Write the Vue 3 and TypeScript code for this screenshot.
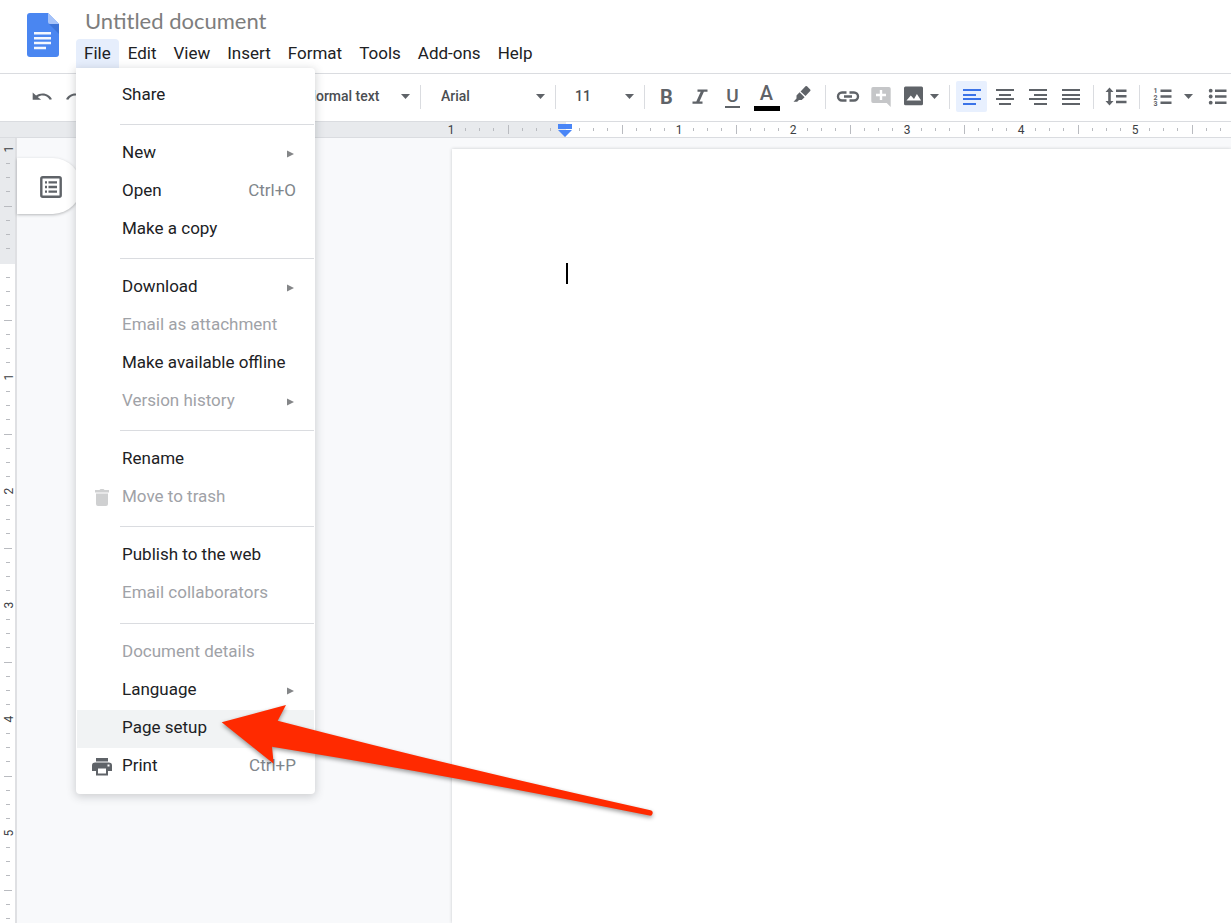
<script setup lang="ts">
import { computed, onBeforeUnmount, onMounted, ref } from 'vue'

interface MenuItem {
  label: string
  shortcut?: string
  submenu?: boolean
  disabled?: boolean
  active?: boolean
  icon?: 'trash' | 'print'
}

interface Tick {
  at: number
  major: boolean
}

interface RulerLabel {
  at: number
  text: string
}

const INCH = 114
const H_ORIGIN = 565
const V_ORIGIN = 125
const WORKSPACE_TOP = 138

const title = ref('Untitled document')
const paragraphStyle = ref('Normal text')
const font = ref('Arial')
const size = ref('11')

const menus: string[] = ['File', 'Edit', 'View', 'Insert', 'Format', 'Tools', 'Add-ons', 'Help']

const fileMenu: MenuItem[][] = [
  [{ label: 'Share' }],
  [{ label: 'New', submenu: true }, { label: 'Open', shortcut: 'Ctrl+O' }, { label: 'Make a copy' }],
  [
    { label: 'Download', submenu: true },
    { label: 'Email as attachment', disabled: true },
    { label: 'Make available offline' },
    { label: 'Version history', submenu: true, disabled: true },
  ],
  [{ label: 'Rename' }, { label: 'Move to trash', disabled: true, icon: 'trash' }],
  [{ label: 'Publish to the web' }, { label: 'Email collaborators', disabled: true }],
  [
    { label: 'Document details', disabled: true },
    { label: 'Language', submenu: true },
    { label: 'Page setup', active: true },
    { label: 'Print', shortcut: 'Ctrl+P', icon: 'print' },
  ],
]

// Ruler marks: one every eighth of an inch, a taller one at each half inch.
function makeTicks(origin: number, length: number): Tick[] {
  const ticks: Tick[] = []
  for (let i = -7; origin + (i * INCH) / 8 < length; i++) {
    if (i % 8 === 0) continue
    ticks.push({ at: Math.floor(origin + (i * INCH) / 8), major: i % 4 === 0 })
  }
  return ticks
}

// Numbers are drawn only where they fit whole on the ruler.
function makeLabels(origin: number, length: number): RulerLabel[] {
  const labels: RulerLabel[] = [{ at: origin - INCH, text: '1' }]
  for (let i = 1; origin + i * INCH < length - 6; i++) {
    labels.push({ at: origin + i * INCH, text: String(i) })
  }
  return labels
}

const viewWidth = ref(window.innerWidth)
const viewHeight = ref(window.innerHeight)

function measure(): void {
  viewWidth.value = window.innerWidth
  viewHeight.value = window.innerHeight
}

onMounted(() => window.addEventListener('resize', measure))
onBeforeUnmount(() => window.removeEventListener('resize', measure))

const hTicks = computed(() => makeTicks(H_ORIGIN, viewWidth.value))
const hLabels = computed(() => makeLabels(H_ORIGIN, viewWidth.value))
const vTicks = computed(() => makeTicks(V_ORIGIN, viewHeight.value - WORKSPACE_TOP))
const vLabels = computed(() => makeLabels(V_ORIGIN, viewHeight.value - WORKSPACE_TOP))

const alignments = [
  { name: 'Left align', active: true, d: 'M3 5h18M3 10h13M3 14h18M3 19h13' },
  { name: 'Center align', active: false, d: 'M3 5h18M6 10h12M3 14h18M6 19h12' },
  { name: 'Right align', active: false, d: 'M3 5h18M8 10h13M3 14h18M8 19h13' },
  { name: 'Justify', active: false, d: 'M3 5h18M3 10h18M3 14h18M3 19h18' },
]
</script>

<template>
  <div class="app">
    <header class="header">
      <a class="logo" href="#" aria-label="Docs home">
        <svg width="32" height="44" viewBox="0 0 32 44">
          <path d="M3 0h18l11 11v30a3 3 0 0 1-3 3H3a3 3 0 0 1-3-3V3a3 3 0 0 1 3-3z" fill="#4a86f1" />
          <path d="M22 11h10v10z" fill="#3d74d8" />
          <path d="M21 0l11 11H23a2 2 0 0 1-2-2z" fill="#a6c3f9" />
          <path d="M7 20.300h17M7 25.200h17M7 30h17M7 35h12" stroke="#f4f7fe" stroke-width="2.400" />
        </svg>
      </a>
      <div class="heading">
        <input v-model="title" class="title" aria-label="Document title" />
        <nav class="menubar" aria-label="Menu bar">
          <button v-for="m in menus" :key="m" type="button" class="menu-button" :class="{ open: m === 'File' }">{{ m }}</button>
          <div class="dropdown" role="menu" aria-label="File">
            <div v-for="(group, g) in fileMenu" :key="g" class="group" role="group">
              <button
                v-for="item in group"
                :key="item.label"
                type="button"
                role="menuitem"
                class="item"
                :class="{ active: item.active }"
                :disabled="item.disabled"
              >
                <span class="item-icon">
                  <svg v-if="item.icon === 'trash'" width="16" height="18" viewBox="0 0 16 18" fill="#cfd0d1">
                    <path d="M1 1h4.500l1-1h3l1 1H15v2.500H1zM2 4.500h12V15a2 2 0 0 1-2 2H4a2 2 0 0 1-2-2z" />
                  </svg>
                  <svg v-if="item.icon === 'print'" width="20" height="18" viewBox="0 0 20 18" fill="#5f6368">
                    <path
                      fill-rule="evenodd"
                      d="M4 0h12v3.500H4zM3 4.500h14a3 3 0 0 1 3 3V13h-4v4.500H4V13H0V7.500a3 3 0 0 1 3-3zM6 10.500v5h8v-5zM15.500 6.500v2h2v-2z"
                    />
                  </svg>
                </span>
                <span class="item-label">{{ item.label }}</span>
                <span v-if="item.shortcut" class="shortcut">{{ item.shortcut }}</span>
                <svg v-if="item.submenu" class="chevron" width="8" height="8" viewBox="0 0 8 8">
                  <path d="M0 .5l7 3.500-7 3.500z" fill="#848688" />
                </svg>
              </button>
            </div>
          </div>
        </nav>
      </div>
    </header>

    <div class="toolbar" role="toolbar" aria-label="Formatting">
      <button type="button" class="tool" aria-label="Undo">
        <svg class="icon" viewBox="0 0 24 24">
          <path
            transform="translate(.8 2) scale(.94 .8)"
            d="M12.500 8c-2.650 0-5.050.99-6.900 2.600L2 7v9h9l-3.620-3.620c1.390-1.160 3.160-1.880 5.120-1.880 3.540 0 6.550 2.310 7.600 5.500l2.370-.78C21.080 11.030 17.150 8 12.500 8z"
          />
        </svg>
      </button>
      <button type="button" class="tool" aria-label="Redo">
        <svg class="icon" viewBox="0 0 24 24">
          <path
            transform="translate(24.200 2) scale(-.94 .8)"
            d="M12.500 8c-2.650 0-5.050.99-6.900 2.600L2 7v9h9l-3.620-3.620c1.390-1.160 3.160-1.880 5.120-1.880 3.540 0 6.550 2.310 7.600 5.500l2.370-.78C21.080 11.030 17.150 8 12.500 8z"
          />
        </svg>
      </button>

      <div class="picker style-picker">
        <select v-model="paragraphStyle" aria-label="Styles">
          <option>Normal text</option>
        </select>
        <svg class="caret" viewBox="0 0 9 5"><path d="M0 0h9L4.500 5z" /></svg>
      </div>
      <span class="divider"></span>
      <div class="picker font-picker">
        <select v-model="font" aria-label="Font">
          <option>Arial</option>
        </select>
        <svg class="caret" viewBox="0 0 9 5"><path d="M0 0h9L4.500 5z" /></svg>
      </div>
      <span class="divider"></span>
      <div class="picker size-picker">
        <select v-model="size" aria-label="Font size">
          <option>11</option>
        </select>
        <svg class="caret" viewBox="0 0 9 5"><path d="M0 0h9L4.500 5z" /></svg>
      </div>
      <span class="divider"></span>

      <button type="button" class="tool letter bold" aria-label="Bold">B</button>
      <button type="button" class="tool" aria-label="Italic">
        <svg class="icon" viewBox="0 0 24 24">
          <path d="M9.500 4.500h10v2.200h-3.600L11.500 16.500h3v2.200h-10V16.500h3.800l4.400-9.800H9.500z" />
        </svg>
      </button>
      <button type="button" class="tool letter underline" aria-label="Underline">U</button>
      <button type="button" class="tool letter color" aria-label="Text color">A</button>
      <button type="button" class="tool highlight" aria-label="Highlight color">
        <svg class="icon" viewBox="0 0 24 24">
          <path d="M15.500 1.300q.8-.6 1.500 0l3.200 3.200q.7.800 0 1.600L15.500 11l-4.900-4.600z" />
          <path d="M9.600 7.300l5 4.900-2.900 2.800H9l-1.800 1.800H3.500l3-3.200v-3.200z" />
        </svg>
      </button>
      <span class="divider"></span>

      <button type="button" class="tool" aria-label="Insert link">
        <svg class="icon line" viewBox="0 0 24 24">
          <path d="M10.500 7.500H6a4 4 0 0 0 0 8h4.500M13.500 7.500H18a4 4 0 0 1 0 8h-4.500M8 11.500h8" />
        </svg>
      </button>
      <button type="button" class="tool" aria-label="Add comment" disabled>
        <svg class="icon" viewBox="0 0 24 24">
          <path d="M4 2h16a1.700 1.700 0 0 1 1.700 1.700v18.200l-4-3.900H4A1.700 1.700 0 0 1 2.300 16.300V3.700A1.700 1.700 0 0 1 4 2z" fill="#c5c6c8" />
          <path d="M12 5v10M7 10h10" stroke="#fff" stroke-width="2.400" />
        </svg>
      </button>
      <button type="button" class="tool" aria-label="Insert image">
        <svg class="icon" viewBox="0 0 24 24">
          <rect x="2" y="1.500" width="19" height="18.700" rx="1.500" />
          <path d="M4.500 15.500l4.300-5 3.200 3.600L14.900 9l4.200 6.500z" fill="#fff" />
        </svg>
      </button>
      <button type="button" class="drop image-drop" aria-label="Image options">
        <svg class="caret" viewBox="0 0 9 5"><path d="M0 0h9L4.500 5z" /></svg>
      </button>
      <span class="divider"></span>

      <button
        v-for="a in alignments"
        :key="a.name"
        type="button"
        class="tool"
        :class="{ selected: a.active }"
        :aria-label="a.name"
        :aria-pressed="a.active"
      >
        <svg class="icon bars" viewBox="0 0 24 24"><path :d="a.d" /></svg>
      </button>
      <span class="divider wide"></span>

      <button type="button" class="tool" aria-label="Line spacing">
        <svg class="icon" viewBox="0 0 24 24">
          <path d="M4.500 2.500l4 4.500H5.800v9h2.700l-4 4.500-4-4.500h2.700V7H.5zM11 4.500h10.500v2.400H11zM11 10h10.500v2.400H11zM11 15.800h10.500v2.400H11z" />
        </svg>
      </button>
      <span class="divider wide"></span>

      <button type="button" class="tool" aria-label="Numbered list">
        <svg class="icon" viewBox="0 0 24 24">
          <path d="M9.500 4.500h11v2.400h-11zM9.500 10.300h11v2.400h-11zM9.500 16.500h11v2.400h-11z" />
          <text x="2.500" y="8" class="numeral">1</text>
          <text x="2.500" y="14.500" class="numeral">2</text>
          <text x="2.500" y="21" class="numeral">3</text>
        </svg>
      </button>
      <button type="button" class="drop list-drop" aria-label="Numbered list options">
        <svg class="caret" viewBox="0 0 9 5"><path d="M0 0h9L4.500 5z" /></svg>
      </button>
      <button type="button" class="tool" aria-label="Bulleted list">
        <svg class="icon" viewBox="0 0 24 24">
          <path d="M9 4.500h11.500v2.400H9zM9 10.300h11.500v2.400H9zM9 16.500h11.500v2.400H9z" />
          <circle cx="4.700" cy="5.700" r="1.900" />
          <circle cx="4.700" cy="11.500" r="1.900" />
          <circle cx="4.700" cy="17.700" r="1.900" />
        </svg>
      </button>
    </div>

    <div class="h-ruler">
      <svg width="100%" height="15" aria-hidden="true">
        <rect x="0" y="0" width="566" height="15" fill="#e8eaed" />
        <rect
          v-for="t in hTicks"
          :key="t.at"
          :x="t.at"
          :y="t.major ? 3 : 6"
          width="1"
          :height="t.major ? 9 : 3"
          fill="#b9bbc0"
        />
        <text v-for="l in hLabels" :key="l.text + l.at" :x="l.at" y="12" class="ruler-label">{{ l.text }}</text>
        <path d="M558 2h14v5h-14zM558 8h14l-7 7z" fill="#4a86f7" />
      </svg>
    </div>

    <main class="workspace">
      <div class="v-ruler">
        <svg width="15" aria-hidden="true">
          <rect x="0" y="0" width="15" height="126" fill="#e8eaed" />
          <rect
            v-for="t in vTicks"
            :key="t.at"
            :x="t.major ? 4 : 6"
            :y="t.at"
            :width="t.major ? 8 : 4"
            height="1"
            fill="#b9bbc0"
          />
          <text
            v-for="l in vLabels"
            :key="l.text + l.at"
            class="ruler-label"
            :transform="`translate(13 ${l.at}) rotate(-90)`"
          >{{ l.text }}</text>
        </svg>
      </div>
      <button type="button" class="outline" aria-label="Show document outline">
        <svg width="22" height="22" viewBox="0 0 22 22">
          <rect x="1.300" y="1.300" width="19.400" height="19.400" rx="1.500" fill="none" stroke="#5f6368" stroke-width="2.400" />
          <path d="M5 6.400h2M8.500 6.400H17M5 11h2M8.500 11H17M5 15.600h2M8.500 15.600H17" stroke="#5f6368" stroke-width="2.400" />
        </svg>
      </button>
      <div class="sheet" role="textbox" aria-label="Document content" tabindex="0">
        <span class="cursor"></span>
      </div>
    </main>

    <svg class="pointer" width="440" height="120" viewBox="0 0 440 120" aria-hidden="true">
      <path d="M1.700 18.300L66 1l-8.300 15.700Q232 62 430.500 106.200a2.700 2.700 0 0 1-1.200 5.400Q232 72 52 42.700l1.700 17z" fill="#ff2a00" />
    </svg>
  </div>
</template>

<style>
body {
  margin: 0;
}
</style>

<style scoped>
.app {
  position: relative;
  display: flex;
  flex-direction: column;
  height: 100vh;
  overflow: hidden;
  background: #fff;
  color: #202124;
  font-family: Roboto, "Liberation Sans", sans-serif;
  font-size: 17px;
}

button,
input,
select {
  margin: 0;
  padding: 0;
  border: 0;
  background: none;
  color: inherit;
  font: inherit;
  text-align: left;
}

.header {
  display: flex;
  flex: none;
  padding: 0 27px;
  height: 73px;
  border-bottom: 1px solid #dadce0;
}

.logo {
  width: 49px;
  padding-top: 13px;
}

.logo svg {
  display: block;
}

.heading {
  flex: 1;
}

.title {
  display: block;
  box-sizing: border-box;
  width: 100%;
  height: 39px;
  padding: 2px 9px 0;
  outline: none;
  color: #7d7d7d;
  font-family: Lato, Roboto, sans-serif;
  font-size: 22px;
}

.menubar {
  position: relative;
  display: flex;
  gap: 1px;
}

.menu-button {
  height: 29px;
  padding: 0 8px 2px;
  border-radius: 4px 4px 0 0;
  white-space: nowrap;
}

.menu-button.open {
  background: #e6eefc;
}

.dropdown {
  position: absolute;
  z-index: 2;
  top: 29px;
  left: 0;
  box-sizing: border-box;
  width: 239px;
  padding: 9px 1px 8px;
  border-radius: 0 4px 4px 4px;
  background: #fff;
  box-shadow: 0 2px 8px 1px rgba(60, 64, 67, 0.22);
}

.group + .group::before {
  display: block;
  height: 1px;
  margin: 9px 0 10px 43px;
  background: #dadce0;
  content: "";
}

.group:last-child::before {
  margin-top: 10px;
}

.item {
  display: flex;
  align-items: center;
  box-sizing: border-box;
  width: 100%;
  height: 38px;
  padding: 0 18px 0 14px;
}

.item.active {
  background: #f1f3f4;
}

.item:disabled {
  color: #9fa2a7;
}

.item-icon {
  display: flex;
  justify-content: center;
  width: 21px;
  margin-right: 10px;
}

.item-label {
  flex: 1;
  padding-bottom: 4px;
  white-space: nowrap;
}

.shortcut {
  padding-bottom: 4px;
  color: #80868b;
}

.chevron {
  margin-right: 1px;
}

.toolbar {
  display: flex;
  flex: none;
  align-items: center;
  height: 45px;
  padding: 0 0 2px 25px;
  overflow: hidden;
  border-bottom: 1px solid #dadce0;
  color: #5f6368;
}

.toolbar > * {
  flex: none;
}

.tool {
  display: flex;
  align-items: center;
  justify-content: center;
  width: 31px;
  height: 31px;
  margin: 0 1px;
  border-radius: 2px;
}

.tool.selected {
  background: #e8f0fe;
  color: #3b73e8;
}

.icon {
  display: block;
  width: 24px;
  height: 24px;
  fill: currentColor;
}

.icon.line {
  fill: none;
  stroke: currentColor;
  stroke-width: 2.4;
}

.icon.bars {
  stroke: currentColor;
  stroke-width: 2;
}

.letter {
  flex-direction: column;
  font-size: 20px;
  font-weight: 500;
  line-height: 24px;
}

.bold {
  font-weight: 700;
}

.underline {
  box-sizing: border-box;
  justify-content: flex-start;
  padding-top: 5px;
  font-size: 19px;
  line-height: 20px;
}

.underline::after {
  width: 15px;
  height: 2px;
  background: currentColor;
  content: "";
}

.color {
  justify-content: flex-start;
  width: 33px;
  line-height: 25px;
}

.color::after {
  width: 26px;
  height: 5px;
  background: #000;
  content: "";
}

.highlight {
  width: 34px;
}

.divider {
  width: 1px;
  height: 24px;
  margin: 0 5px;
  background: #dadce0;
}

.divider.wide {
  margin: 0 6px;
}

.caret {
  display: block;
  width: 9px;
  height: 5px;
  fill: #5f6368;
}

.drop {
  display: flex;
}

.image-drop {
  margin-right: 5px;
}

.list-drop {
  margin: 0 8px 0 5px;
}

.picker {
  display: grid;
  align-items: center;
  margin-right: 5px;
  color: #4b4e52;
  font-size: 14px;
  font-weight: 500;
}

.picker > * {
  grid-area: 1 / 1;
}

.picker .caret {
  justify-self: end;
  pointer-events: none;
}

.picker select {
  height: 31px;
  padding-bottom: 1px;
  appearance: none;
  outline: none;
}

.style-picker {
  width: 104px;
  margin-left: 215px;
}

.font-picker {
  width: 104px;
  margin-left: 15px;
}

.size-picker {
  width: 59px;
  margin-left: 14px;
}

.numeral {
  font-size: 7px;
  font-weight: 700;
}

.h-ruler {
  flex: none;
  height: 15px;
  overflow: hidden;
  border-bottom: 1px solid #dadce0;
}

.h-ruler svg {
  display: block;
}

.ruler-label {
  fill: #3c4043;
  font-size: 12px;
  text-anchor: middle;
}

.workspace {
  display: flex;
  flex: 1;
  align-items: flex-start;
  min-height: 0;
  overflow: hidden;
  background: #f8f9fb;
}

.v-ruler {
  display: flex;
  flex: none;
  align-self: stretch;
  width: 15px;
  border-right: 2px solid #dfe0e3;
  background: #fff;
}

.v-ruler svg {
  height: 100%;
  overflow: hidden;
}

.outline {
  display: flex;
  flex: none;
  align-items: center;
  box-sizing: border-box;
  width: 64px;
  height: 56px;
  margin-top: 20px;
  padding: 2px 0 0 23px;
  border-radius: 0 28px 28px 0;
  background: #fff;
  box-shadow: 0 1px 3px rgba(60, 64, 67, 0.35);
}

.sheet {
  flex: 1;
  align-self: stretch;
  box-sizing: border-box;
  margin: 11px 0 0 371px;
  padding: 114px;
  outline: none;
  background: #fff;
  box-shadow: 0 0 3px rgba(60, 64, 67, 0.25);
}

.cursor {
  display: block;
  width: 2px;
  height: 21px;
  background: #000;
}

.pointer {
  position: absolute;
  z-index: 3;
  top: 704px;
  left: 220px;
  overflow: visible;
  filter: drop-shadow(0 2px 2px rgba(0, 0, 0, 0.4));
  pointer-events: none;
}
</style>
